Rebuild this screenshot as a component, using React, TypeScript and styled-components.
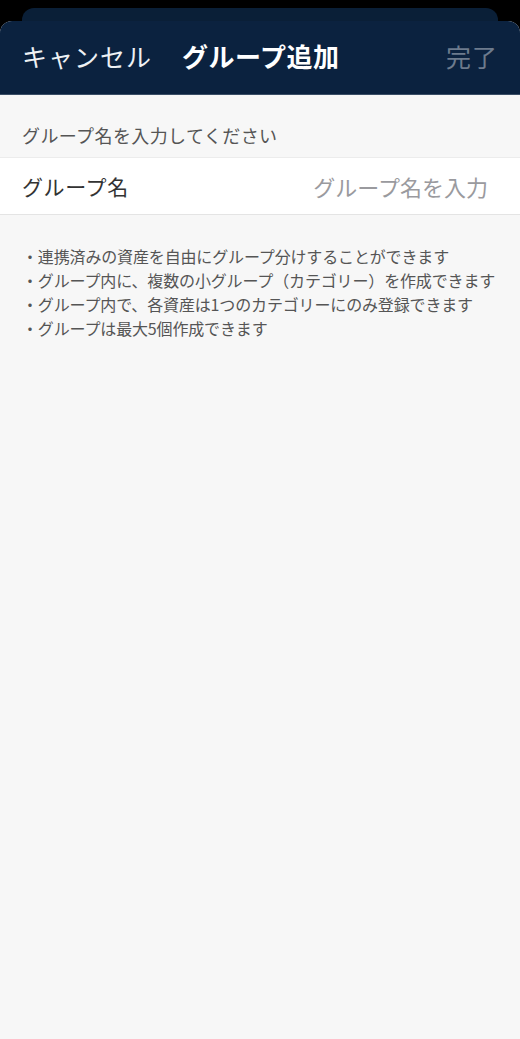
import styled, { createGlobalStyle } from 'styled-components';

const GlobalStyle = createGlobalStyle`
  html, body {
    margin: 0;
    padding: 0;
    background: #000;
  }
  body {
    font-family: "Noto Sans CJK JP", "Noto Sans", sans-serif;
  }
`;

const notes = [
  '・連携済みの資産を自由にグループ分けすることができます',
  '・グループ内に、複数の小グループ（カテゴリー）を作成できます',
  '・グループ内で、各資産は1つのカテゴリーにのみ登録できます',
  '・グループは最大5個作成できます',
];

function App() {
  return (
    <Screen>
      <GlobalStyle />
      <BackSheet />
      <Sheet>
        <Header>
          <HeaderButton>キャンセル</HeaderButton>
          <Title>グループ追加</Title>
          <HeaderButton $disabled>完了</HeaderButton>
        </Header>
        <Body>
          <SectionLabel>グループ名を入力してください</SectionLabel>
          <InputRow>
            <RowLabel>グループ名</RowLabel>
            <NameInput placeholder="グループ名を入力" />
          </InputRow>
          <Notes>
            {notes.map((n) => (
              <li key={n}>{n}</li>
            ))}
          </Notes>
        </Body>
      </Sheet>
    </Screen>
  );
}

const Screen = styled.div`
  width: 520px;
  height: 1039px;
  background: #000;
  display: flex;
  flex-direction: column;
  overflow: hidden;
  padding-top: 8px;
  box-sizing: border-box;
`;

const BackSheet = styled.div`
  margin: 0 22px;
  height: 13px;
  flex: none;
  background: #0a1f37;
  border-radius: 12px 12px 0 0;
`;

const Sheet = styled.div`
  flex: 1;
  display: flex;
  flex-direction: column;
  background: #f7f7f7;
  border-radius: 12px 12px 0 0;
  overflow: hidden;
`;

const Header = styled.header`
  height: 74px;
  flex: none;
  display: flex;
  align-items: center;
  padding: 0 22px 4px;
  background: #0b223f;
  border-bottom: 1px solid #3a4e66;
  box-sizing: border-box;
`;

const HeaderButton = styled.span<{ $disabled?: boolean }>`
  font-size: 25px;
  letter-spacing: 1px;
  color: ${(p) => (p.$disabled ? '#6d7b8d' : '#eef1f4')};
  margin-left: ${(p) => (p.$disabled ? 'auto' : '0')};
`;

const Title = styled.h1`
  margin: 0 0 0 30px;
  font-size: 26px;
  font-weight: 700;
  letter-spacing: 0.5px;
  color: #fff;
`;

const Body = styled.main`
  flex: 1;
  display: flex;
  flex-direction: column;
`;

const SectionLabel = styled.div`
  padding: 27px 22px 9px;
  font-size: 18px;
  line-height: 26px;
  letter-spacing: 0.4px;
  color: #555;
`;

const InputRow = styled.label`
  height: 58px;
  display: flex;
  align-items: center;
  justify-content: space-between;
  padding: 0 32px 0 22px;
  background: #fff;
  border-top: 1px solid #ececec;
  border-bottom: 1px solid #e4e4e4;
  box-sizing: border-box;
`;

const RowLabel = styled.span`
  font-size: 21px;
  letter-spacing: 0.6px;
  color: #333;
`;

const NameInput = styled.input`
  border: none;
  outline: none;
  background: transparent;
  text-align: right;
  font-family: inherit;
  font-size: 22px;
  color: #333;
  width: 260px;
  padding: 0;
  &::placeholder {
    color: #9a9a9e;
  }
`;

const Notes = styled.ul`
  list-style: none;
  margin: 0;
  padding: 29px 0 0 22px;
  font-size: 16px;
  line-height: 24px;
  letter-spacing: -0.15px;
  white-space: nowrap;
  color: #555;
`;

export default App;
